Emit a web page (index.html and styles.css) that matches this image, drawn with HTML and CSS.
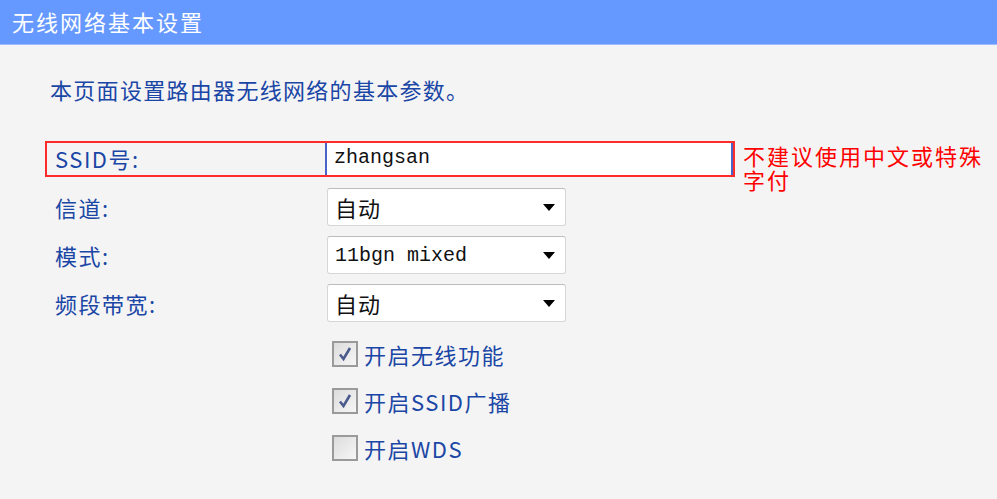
FILE: index.html
```html
<!DOCTYPE html>
<html lang="zh-CN">
<head>
  <meta charset="UTF-8">
  <title>无线网络基本设置</title>
  <link rel="stylesheet" href="styles.css">
</head>
<body>
  <div class="title-bar">无线网络基本设置</div>

  <div class="content">
    <p class="intro">本页面设置路由器无线网络的基本参数。</p>

    <div class="ssid-row">
      <div class="ssid-box">
        <label class="label">SSID号:</label>
        <div class="text-input">zhangsan</div>
      </div>
      <div class="note">不建议使用中文或特殊字付</div>
    </div>

    <div class="form-row">
      <label class="label">信道:</label>
      <div class="select">
        <span>自动</span>
        <svg class="arrow" width="12" height="7" viewBox="0 0 12 7"><path d="M0 0H12L6 7Z" fill="#000"/></svg>
      </div>
    </div>

    <div class="form-row">
      <label class="label">模式:</label>
      <div class="select">
        <span class="mono">11bgn mixed</span>
        <svg class="arrow" width="12" height="7" viewBox="0 0 12 7"><path d="M0 0H12L6 7Z" fill="#000"/></svg>
      </div>
    </div>

    <div class="form-row">
      <label class="label">频段带宽:</label>
      <div class="select">
        <span>自动</span>
        <svg class="arrow" width="12" height="7" viewBox="0 0 12 7"><path d="M0 0H12L6 7Z" fill="#000"/></svg>
      </div>
    </div>

    <div class="checks">
      <div class="check-row">
        <span class="checkbox checked">
          <svg width="18" height="18" viewBox="0 0 18 18"><path d="M4 9.5L7.5 14L14 3" fill="none" stroke="#4a5a8c" stroke-width="2.6"/></svg>
        </span>
        <span class="check-text">开启无线功能</span>
      </div>
      <div class="check-row">
        <span class="checkbox checked">
          <svg width="18" height="18" viewBox="0 0 18 18"><path d="M4 9.5L7.5 14L14 3" fill="none" stroke="#4a5a8c" stroke-width="2.6"/></svg>
        </span>
        <span class="check-text">开启SSID广播</span>
      </div>
      <div class="check-row">
        <span class="checkbox"></span>
        <span class="check-text">开启WDS</span>
      </div>
    </div>
  </div>
</body>
</html>
```

FILE: styles.css
```css
* {
  box-sizing: border-box;
  margin: 0;
  padding: 0;
}

body {
  background-color: #f4f4f4;
  font-family: "Noto Sans CJK SC", "Noto Sans", sans-serif;
  color: #1a46a6;
}

.title-bar {
  height: 45px;
  background-color: #6699ff;
  border-bottom: 1px solid #9dbbff;
  color: #ffffff;
  font-size: 22px;
  letter-spacing: 2px;
  line-height: 42px;
  padding-left: 12px;
}

.content {
  padding-left: 45px;
}

.intro {
  margin-top: 31px;
  padding-left: 5px;
  font-size: 22px;
  letter-spacing: 1.3px;
  line-height: 26px;
}

/* SSID row with red highlight */
.ssid-row {
  display: flex;
  align-items: flex-start;
  height: 36px;
  margin-top: 39px;
}

.ssid-box {
  display: flex;
  width: 690px;
  height: 36px;
  border: 2px solid #ff2a2a;
}

.ssid-box .label {
  width: 278px;
  padding-left: 8px;
}

.label {
  font-size: 22px;
  line-height: 30px;
  letter-spacing: 1.5px;
}

.text-input {
  flex: 1;
  background: #ffffff;
  border-left: 2px solid #4a63c8;
  border-right: 2px solid #4a63c8;
  padding-left: 7px;
  font-family: "Liberation Mono", monospace;
  font-size: 20px;
  line-height: 30px;
  color: #111;
}

.note {
  width: 252px;
  margin-left: 8px;
  margin-top: 2px;
  color: #ff0000;
  font-size: 22px;
  letter-spacing: 2px;
  line-height: 24px;
}

/* selects */
.form-row {
  display: flex;
  align-items: center;
  margin-top: 11px;
}

.form-row + .form-row {
  margin-top: 10px;
}

.form-row .label {
  width: 282px;
  padding-left: 10px;
}

.select {
  display: flex;
  align-items: center;
  justify-content: space-between;
  width: 239px;
  height: 38px;
  background: #ffffff;
  border: 1px solid #d6d6d6;
  border-top-color: #bdbdbd;
  border-radius: 3px;
  padding: 0 10px 0 7px;
  font-size: 22px;
  letter-spacing: 1px;
  color: #111;
}

.mono {
  font-family: "Liberation Mono", monospace;
  font-size: 20px;
  letter-spacing: 0;
}

/* checkboxes */
.checks {
  margin-top: 19px;
  padding-left: 287px;
}

.check-row {
  display: flex;
  align-items: center;
  height: 26px;
  margin-bottom: 21px;
}

.checkbox {
  display: flex;
  align-items: center;
  justify-content: center;
  width: 26px;
  height: 26px;
  border: 2px solid #9a9a9a;
  background: linear-gradient(135deg, #dcdcdc, #f6f6f6);
  margin-right: 6px;
}

.check-text {
  font-size: 22px;
  letter-spacing: 1.5px;
  line-height: 26px;
}
```
